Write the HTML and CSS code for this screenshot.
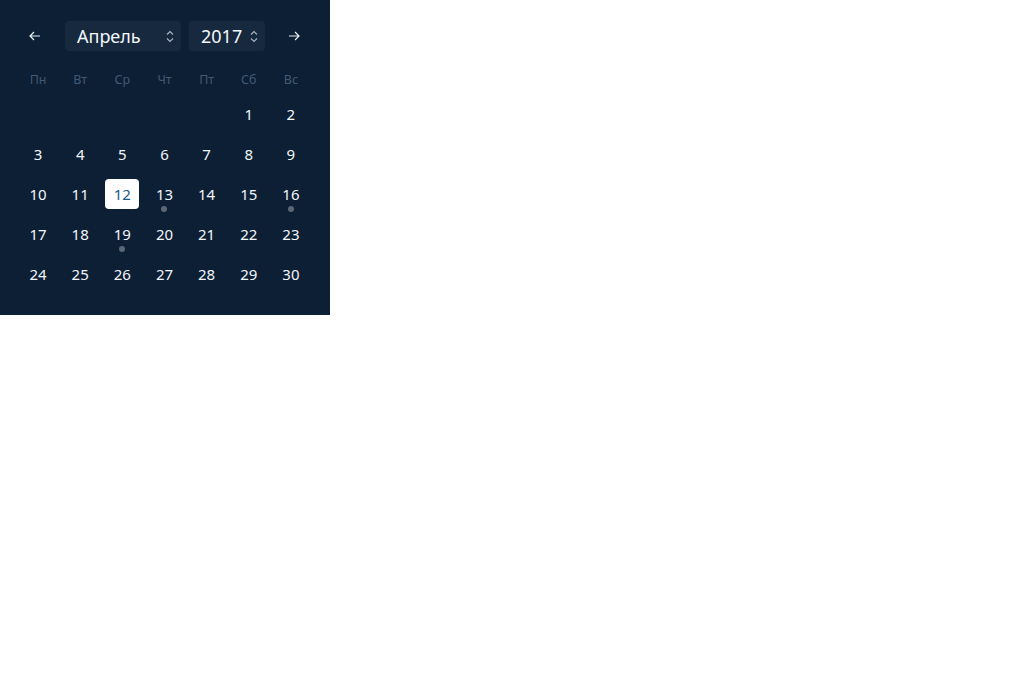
FILE: index.html
```html
<!DOCTYPE html>
<html lang="ru">
<head>
<meta charset="utf-8">
<title>Календарь</title>
<link rel="stylesheet" href="styles.css">
</head>
<body>
<div class="calendar">
  <div class="header">
    <button class="nav prev" aria-label="Предыдущий месяц">
      <svg width="12" height="10" viewBox="0 0 12 10"><path d="M11 5H1.5M5 1L1 5l4 4" fill="none" stroke="#e8eef5" stroke-width="1.2"/></svg>
    </button>
    <div class="select month"><span>Апрель</span><svg class="chev" width="8" height="13" viewBox="0 0 8 13"><path d="M1 4.5l3-3 3 3M1 8.5l3 3 3-3" fill="none" stroke="#aab6c4" stroke-width="1.1"/></svg></div>
    <div class="select year"><span>2017</span><svg class="chev" width="8" height="13" viewBox="0 0 8 13"><path d="M1 4.5l3-3 3 3M1 8.5l3 3 3-3" fill="none" stroke="#aab6c4" stroke-width="1.1"/></svg></div>
    <button class="nav next" aria-label="Следующий месяц">
      <svg width="12" height="10" viewBox="0 0 12 10"><path d="M1 5h9.5M7 1l4 4-4 4" fill="none" stroke="#e8eef5" stroke-width="1.2"/></svg>
    </button>
  </div>
  <div class="grid weekdays">
    <div>Пн</div><div>Вт</div><div>Ср</div><div>Чт</div><div>Пт</div><div>Сб</div><div>Вс</div>
  </div>
  <div class="grid days">
    <div></div><div></div><div></div><div></div><div></div>
    <div class="day"><span>1</span></div><div class="day"><span>2</span></div>
    <div class="day"><span>3</span></div><div class="day"><span>4</span></div><div class="day"><span>5</span></div><div class="day"><span>6</span></div><div class="day"><span>7</span></div><div class="day"><span>8</span></div><div class="day"><span>9</span></div>
    <div class="day"><span>10</span></div><div class="day"><span>11</span></div><div class="day selected"><span>12</span></div><div class="day event"><span>13</span></div><div class="day"><span>14</span></div><div class="day"><span>15</span></div><div class="day event"><span>16</span></div>
    <div class="day"><span>17</span></div><div class="day"><span>18</span></div><div class="day event"><span>19</span></div><div class="day"><span>20</span></div><div class="day"><span>21</span></div><div class="day"><span>22</span></div><div class="day"><span>23</span></div>
    <div class="day"><span>24</span></div><div class="day"><span>25</span></div><div class="day"><span>26</span></div><div class="day"><span>27</span></div><div class="day"><span>28</span></div><div class="day"><span>29</span></div><div class="day"><span>30</span></div>
  </div>
</div>
</body>
</html>
```
FILE: styles.css
```css
html, body {
  margin: 0;
  padding: 0;
  background: #ffffff;
}
body {
  font-family: "Noto Sans", "Open Sans", "DejaVu Sans", sans-serif;
}
.calendar {
  width: 330px;
  height: 315px;
  box-sizing: border-box;
  background: #0c1f35;
  padding: 21px 18px 21px 17px;
  color: #f2f6fa;
}
.header {
  display: flex;
  align-items: center;
  height: 30px;
}
.nav {
  border: 0;
  background: transparent;
  padding: 0;
  height: 30px;
  display: flex;
  align-items: center;
  justify-content: center;
  cursor: pointer;
}
.prev {
  width: 36px;
  margin-right: 12px;
}
.next {
  width: 34px;
  margin-left: 12px;
}
.select {
  height: 30px;
  box-sizing: border-box;
  background: #17293f;
  border-radius: 4px;
  display: flex;
  align-items: center;
  justify-content: space-between;
  padding: 0 7px 0 12px;
  font-size: 18px;
  color: #f4f7fb;
}
.select span {
  line-height: 30px;
}
.month {
  width: 116px;
}
.year {
  width: 76px;
  margin-left: 8px;
}
.chev {
  display: block;
}
.grid {
  display: grid;
  grid-template-columns: repeat(7, 1fr);
}
.weekdays {
  margin-top: 14px;
  height: 29px;
  align-items: center;
  font-size: 12.5px;
  color: #415a73;
  text-align: center;
}
.weekdays div {
  line-height: 29px;
}
.days {
  grid-auto-rows: 40px;
}
.day {
  position: relative;
  display: flex;
  align-items: center;
  justify-content: center;
  font-size: 15px;
}
.day span {
  width: 34px;
  height: 30px;
  line-height: 30px;
  text-align: center;
  border-radius: 4px;
}
.day.selected span {
  background: #ffffff;
  color: #1b5a88;
}
.day.event::after {
  content: "";
  position: absolute;
  left: 50%;
  top: 32px;
  width: 6px;
  height: 6px;
  margin-left: -3px;
  border-radius: 50%;
  background: #5b6777;
}
```
